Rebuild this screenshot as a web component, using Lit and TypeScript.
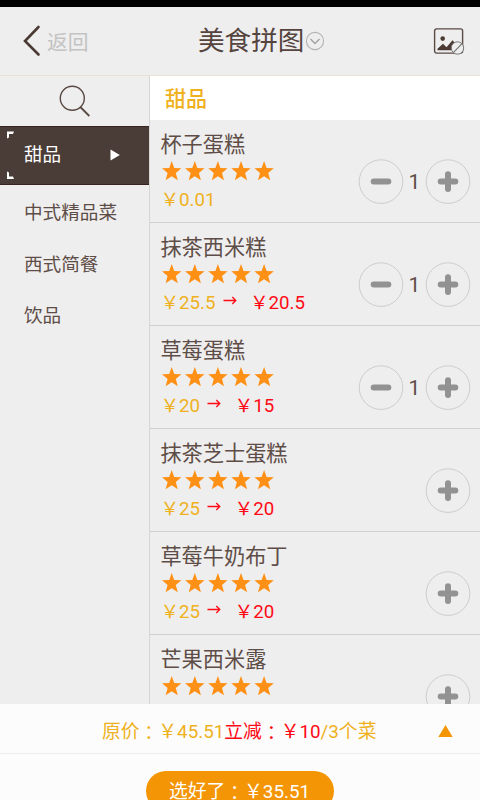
import { LitElement, html, css, svg, nothing } from "lit";
import { customElement, property } from "lit/decorators.js";

interface Dish {
  name: string;
  price: string;
  sale?: string;
  count: number;
}

const DISHES: Dish[] = [
  { name: "杯子蛋糕", price: "0.01", count: 1 },
  { name: "抹茶西米糕", price: "25.5", sale: "20.5", count: 1 },
  { name: "草莓蛋糕", price: "20", sale: "15", count: 1 },
  { name: "抹茶芝士蛋糕", price: "25", sale: "20", count: 0 },
  { name: "草莓牛奶布丁", price: "25", sale: "20", count: 0 },
  { name: "芒果西米露", price: "25", sale: "20", count: 0 },
];

const CATEGORIES = ["甜品", "中式精品菜", "西式简餐", "饮品"];

@customElement("dish-row")
class DishRow extends LitElement {
  static styles = css`
    :host { display: block; flex: none; height: 103px; box-sizing: border-box; border-bottom: 1px solid #cfcfcf; }
    .row { display: flex; justify-content: space-between; height: 100%; }
    .info { padding: 11px 0 0 10.4px; }
    .name { font-size: 21.2px; line-height: 28px; color: #5e4d47; white-space: nowrap; }
    .stars { display: block; margin: 2px 0 0 1.6px; }
    .price { display: flex; align-items: center; font-size: 18.7px; line-height: 24px; color: #efb11d; margin-top: 6px; white-space: nowrap; }
    .arrow { margin: -5px 13px 0 7.4px; }
    .sale { color: #ff0a14; }
    .stepper { display: flex; align-items: center; height: 46px; padding: 39px 9px 0 0; }
    .btn { display: block; }
    .count { width: 21px; text-align: center; font-size: 21px; line-height: 28px; color: #5e4d47; }
  `;

  @property({ attribute: false }) dish!: Dish;

  private button(plus: boolean) {
    return html`<svg class="btn" width="46" height="46" viewBox="0 0 46 46" fill="none">
      <circle cx="23" cy="22.6" r="21.8" stroke="#cdcdcd" stroke-width="1" />
      <path d=${plus ? "M15.7 22.6H30.3M23 15.3V29.9" : "M15.7 22.6H30.3"} stroke="#929292" stroke-width="6" stroke-linecap="round" />
    </svg>`;
  }

  render() {
    const { name, price, sale, count } = this.dish;
    return html`<div class="row">
      <div class="info">
        <div class="name">${name}</div>
        <svg class="stars" width="113" height="21" viewBox="0 0 113 21" fill="#ff9016">
          ${[0, 1, 2, 3, 4].map(
            (i) => svg`<path transform="translate(${i * 23.1} 0)" d="M9.7 0L12.2 6.9L19.4 7.3L13.8 11.9L15.8 19.2L9.7 15.2L3.6 19.2L5.6 11.9L0 7.3L7.2 6.9Z" />`
          )}
        </svg>
        <div class="price">
          <span>￥${price}</span>
          ${sale
            ? html`<svg class="arrow" width="14" height="10" viewBox="0 0 14 10" fill="none" stroke="#ff0a14" stroke-width="1.3">
                  <path d="M.5 4.5H12.5M9.3 1L12.8 4.5L9.3 8" />
                </svg><span class="sale">￥${sale}</span>`
            : nothing}
        </div>
      </div>
      <div class="stepper">
        ${count ? html`${this.button(false)}<span class="count">${count}</span>` : nothing}
        ${this.button(true)}
      </div>
    </div>`;
  }
}

@customElement("app-root")
class AppRoot extends LitElement {
  static styles = css`
    :host {
      display: flex; flex-direction: column; width: 480px; height: 800px; overflow: hidden;
      background: #eee; color: #5e4d47;
      font-family: Roboto, "Noto Sans CJK SC", sans-serif;
    }
    .status { flex: none; height: 7px; background: #000; }
    .header {
      flex: none; height: 69px; box-sizing: border-box; border-bottom: 1px solid #eedfd3;
      display: grid; grid-template-columns: 150px 1fr 150px; align-items: center;
    }
    .back { display: flex; align-items: center; padding-left: 22px; font-size: 20.8px; line-height: 30px; color: #c3c3c3; }
    .back svg { margin-right: 6px; }
    .back span { padding-top: 3px; }
    .title { display: flex; align-items: center; padding-left: 48px; font-size: 26.6px; line-height: 36px; color: #55443e; white-space: nowrap; }
    .title svg { margin: 0 0 0 1px; flex: none; }
    .photo { justify-self: end; margin-right: 15px; }
    .photo svg { display: block; }
    .body { flex: 1; min-height: 0; display: flex; }
    .side { width: 149px; flex: none; border-right: 1px solid #d6d6d6; font-size: 18.6px; }
    .search { height: 50px; display: flex; justify-content: center; align-items: center; }
    .cat { height: 51.5px; padding-left: 24px; display: flex; align-items: center; box-sizing: border-box; }
    .active {
      height: 59px; background: #4a3c37; color: #fff; padding: 0 29px 3px 6px;
      border-top: 1px solid #35241f; border-bottom: 1px solid #35241f;
    }
    .active span { padding-bottom: 3px; }
    .corners { margin: 2px 10px 0 0; }
    .pointer { margin: 2px 0 0 auto; }
    .main { flex: 1; min-width: 0; display: flex; flex-direction: column; overflow: hidden; }
    .heading { flex: none; height: 44px; line-height: 46px; padding-left: 15px; background: #fff; color: #efb11d; font-size: 21px; font-weight: 500; }
    .summary {
      flex: none; height: 50px; box-sizing: border-box; border-bottom: 1px solid #ececec; background: #fcfcfc;
      display: flex; align-items: center; padding: 7px 27px 0 102px; font-size: 18.8px; line-height: 28px; color: #efb11d; white-space: nowrap;
    }
    .colon { font-family: "Noto Sans CJK TC", sans-serif; line-height: 1; vertical-align: -2px; }
    .off { color: #ff0a14; }
    .up { margin: 0 0 2px auto; }
    .footer { flex: none; height: 46px; background: #fcfcfc; overflow: hidden; }
    .done { width: 188px; height: 40px; margin: 17px 0 0 145.5px; border-radius: 20px; background: #f39505; color: #fff; font-size: 18.8px; line-height: 42px; text-align: center; white-space: nowrap; }
  `;

  render() {
    const colon = html`<span class="colon" lang="zh-Hant">：</span>`;
    return html`
      <div class="status"></div>
      <div class="header">
        <div class="back">
          <svg width="19" height="32" viewBox="0 0 19 32" fill="none" stroke="#4b3a34" stroke-width="2.6" stroke-linecap="round">
            <path d="M16.5 2L3 16L16.5 29.5" />
          </svg><span>返回</span>
        </div>
        <div class="title">
          美食拼图
          <svg width="20" height="20" viewBox="0 0 20 20" fill="none" stroke="#b3b3b3">
            <circle cx="10" cy="10" r="8.6" stroke-width="1.1" />
            <path d="M5.5 8L10 12.5L14.5 8" stroke="#a0a0a0" stroke-width="1.3" />
          </svg>
        </div>
        <div class="photo">
          <svg width="32" height="28" viewBox="0 0 32 28">
            <rect x="1.6" y="1.9" width="28" height="24.2" rx="2" fill="none" stroke="#5a4a44" stroke-width="1.4" />
            <circle cx="9.7" cy="11.6" r="2.3" fill="#4b3a34" />
            <path d="M4.5 23.2V21.8L10 16.8L13.5 20.3L19.5 13.3L24 18.3V23.2Z" fill="#4b3a34" />
            <circle cx="24.5" cy="21" r="6.2" fill="#eee" stroke="#777" stroke-width="1" />
            <path d="M20.6 25.3L28.6 17" stroke="#777" stroke-width="1.1" />
          </svg>
        </div>
      </div>
      <div class="body">
        <div class="side">
          <div class="search">
            <svg width="32" height="32" viewBox="0 0 32 32" fill="none" stroke="#594842">
              <circle cx="13.3" cy="13.3" r="12" stroke-width="1.4" />
              <path d="M21.3 22L30.3 31" stroke-width="1.8" />
            </svg>
          </div>
          ${CATEGORIES.map((name, i) =>
            i === 0
              ? html`<div class="cat active">
                  <svg class="corners" width="8" height="50" viewBox="0 0 8 50" fill="#fff">
                    <path d="M1 1.5H8L7 4H3V7.5L1 8.5ZM1 41.5L3 42.5V46.5H7L8 49H1Z" />
                  </svg><span>${name}</span>
                  <svg class="pointer" width="10" height="12" viewBox="0 0 10 12" fill="#fff"><path d="M.5 .5L9.8 6L.5 11.5Z" /></svg>
                </div>`
              : html`<div class="cat">${name}</div>`
          )}
        </div>
        <div class="main">
          <div class="heading">甜品</div>
          ${DISHES.map((dish) => html`<dish-row .dish=${dish}></dish-row>`)}
        </div>
      </div>
      <div class="summary">
        <span>原价${colon}￥45.51</span><span class="off">立减${colon}￥10</span><span>/3个菜</span>
        <svg class="up" width="15" height="12" viewBox="0 0 15 12" fill="#f39505"><path d="M7.5 0L14.7 12H.3Z" /></svg>
      </div>
      <div class="footer"><div class="done">选好了${colon}￥35.51</div></div>
    `;
  }
}
